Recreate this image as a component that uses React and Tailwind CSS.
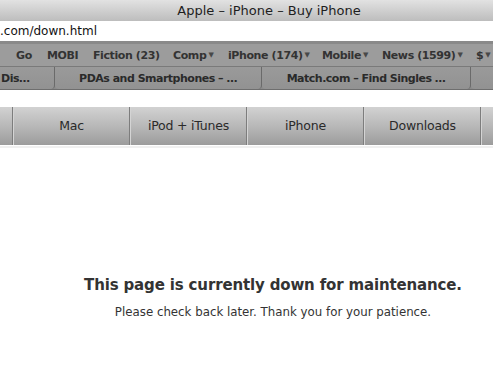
export default function App() {
  const bookmarks = [
    { t: "Go", w: 31 },
    { t: "MOBI", w: 46 },
    { t: "Fiction (23)", w: 80 },
    { t: "Comp", w: 55, m: true },
    { t: "iPhone (174)", w: 94, m: true },
    { t: "Mobile", w: 60, m: true },
    { t: "News (1599)", w: 94, m: true },
    { t: "$", w: 20, m: true },
  ];
  return (
    <div className="w-[493px] h-[366px] overflow-hidden bg-white" style={{ fontFamily: '"DejaVu Sans", "Liberation Sans", sans-serif' }}>
      {/* title bar */}
      <div className="h-[21px] bg-gradient-to-b from-[#e2e2e2] to-[#bdbdbd] flex items-center justify-center pl-[45px] text-[13px] text-[#1e1e1e] leading-none">
        Apple – iPhone – Buy iPhone
      </div>
      {/* url */}
      <div className="h-[23px] bg-white border-b-[3px] border-[#8a8a8a] flex items-center text-[12px] text-[#111] leading-none">
        .com/down.html
      </div>
      {/* bookmarks */}
      <div className="h-[22px] bg-[#9c9c9c] flex items-center text-[11px] font-bold text-[#333] leading-none tracking-[-0.4px] whitespace-nowrap overflow-hidden">
        <div className="flex pl-[16px]">
          {bookmarks.map((b) => (
            <span key={b.t} className="flex items-center shrink-0" style={{ width: b.w }}>
              {b.t}
              {b.m && <span className="text-[7px] ml-[2px] text-[#484848]">▼</span>}
            </span>
          ))}
        </div>
      </div>
      {/* tabs */}
      <div className="h-[24px] bg-[#8a8a8a] border-t border-[#7a7a7a] flex text-[11px] font-bold text-[#2a2a2a] leading-none tracking-[-0.5px] whitespace-nowrap border-b border-b-[#6e6e6e]">
        <div className="w-[55px] flex items-center pl-[1px] bg-gradient-to-b from-[#9a9a9a] to-[#929292] border-r border-[#6a6a6a] rounded-br-[4px]">Dis…</div>
        <div className="w-[207px] flex items-center justify-center bg-gradient-to-b from-[#9a9a9a] to-[#929292] border-r border-[#6a6a6a] rounded-b-[4px]">PDAs and Smartphones – …</div>
        <div className="w-[209px] flex items-center justify-center bg-gradient-to-b from-[#9a9a9a] to-[#929292] border-r border-[#6a6a6a] rounded-b-[4px]">Match.com – Find Singles …</div>
        <div className="flex-1 bg-gradient-to-b from-[#9a9a9a] to-[#929292] rounded-bl-[4px]"></div>
      </div>
      {/* gap */}
      <div className="h-[17px] bg-white"></div>
      {/* nav */}
      <div className="h-[38px] bg-gradient-to-b from-[#d2d2d2] via-[#b8b8b8] to-[#9c9c9c] flex text-[12.5px] text-[#2a2a2a] leading-none tracking-[-0.2px]">
        <div className="w-[13px] border-r border-[#7d7d7d]"></div>
        {["Mac", "iPod + iTunes", "iPhone", "Downloads"].map((n) => (
          <div key={n} className="w-[117px] flex items-center justify-center border-r border-[#7d7d7d] border-l border-l-[#d4d4d4]">
            {n}
          </div>
        ))}
        <div className="flex-1 border-l border-l-[#d4d4d4]"></div>
      </div>
      <div className="h-[2px] bg-[#f0f0f0] mt-[1px]"></div>
      {/* content */}
      <div className="pl-[53px] pt-[130px] text-center text-[#333]">
        <div className="text-[15px] font-bold leading-none tracking-[-0.15px]">This page is currently down for maintenance.</div>
        <div className="text-[11.8px] leading-none mt-[14px] text-[#333]">Please check back later. Thank you for your patience.</div>
      </div>
    </div>
  );
}
